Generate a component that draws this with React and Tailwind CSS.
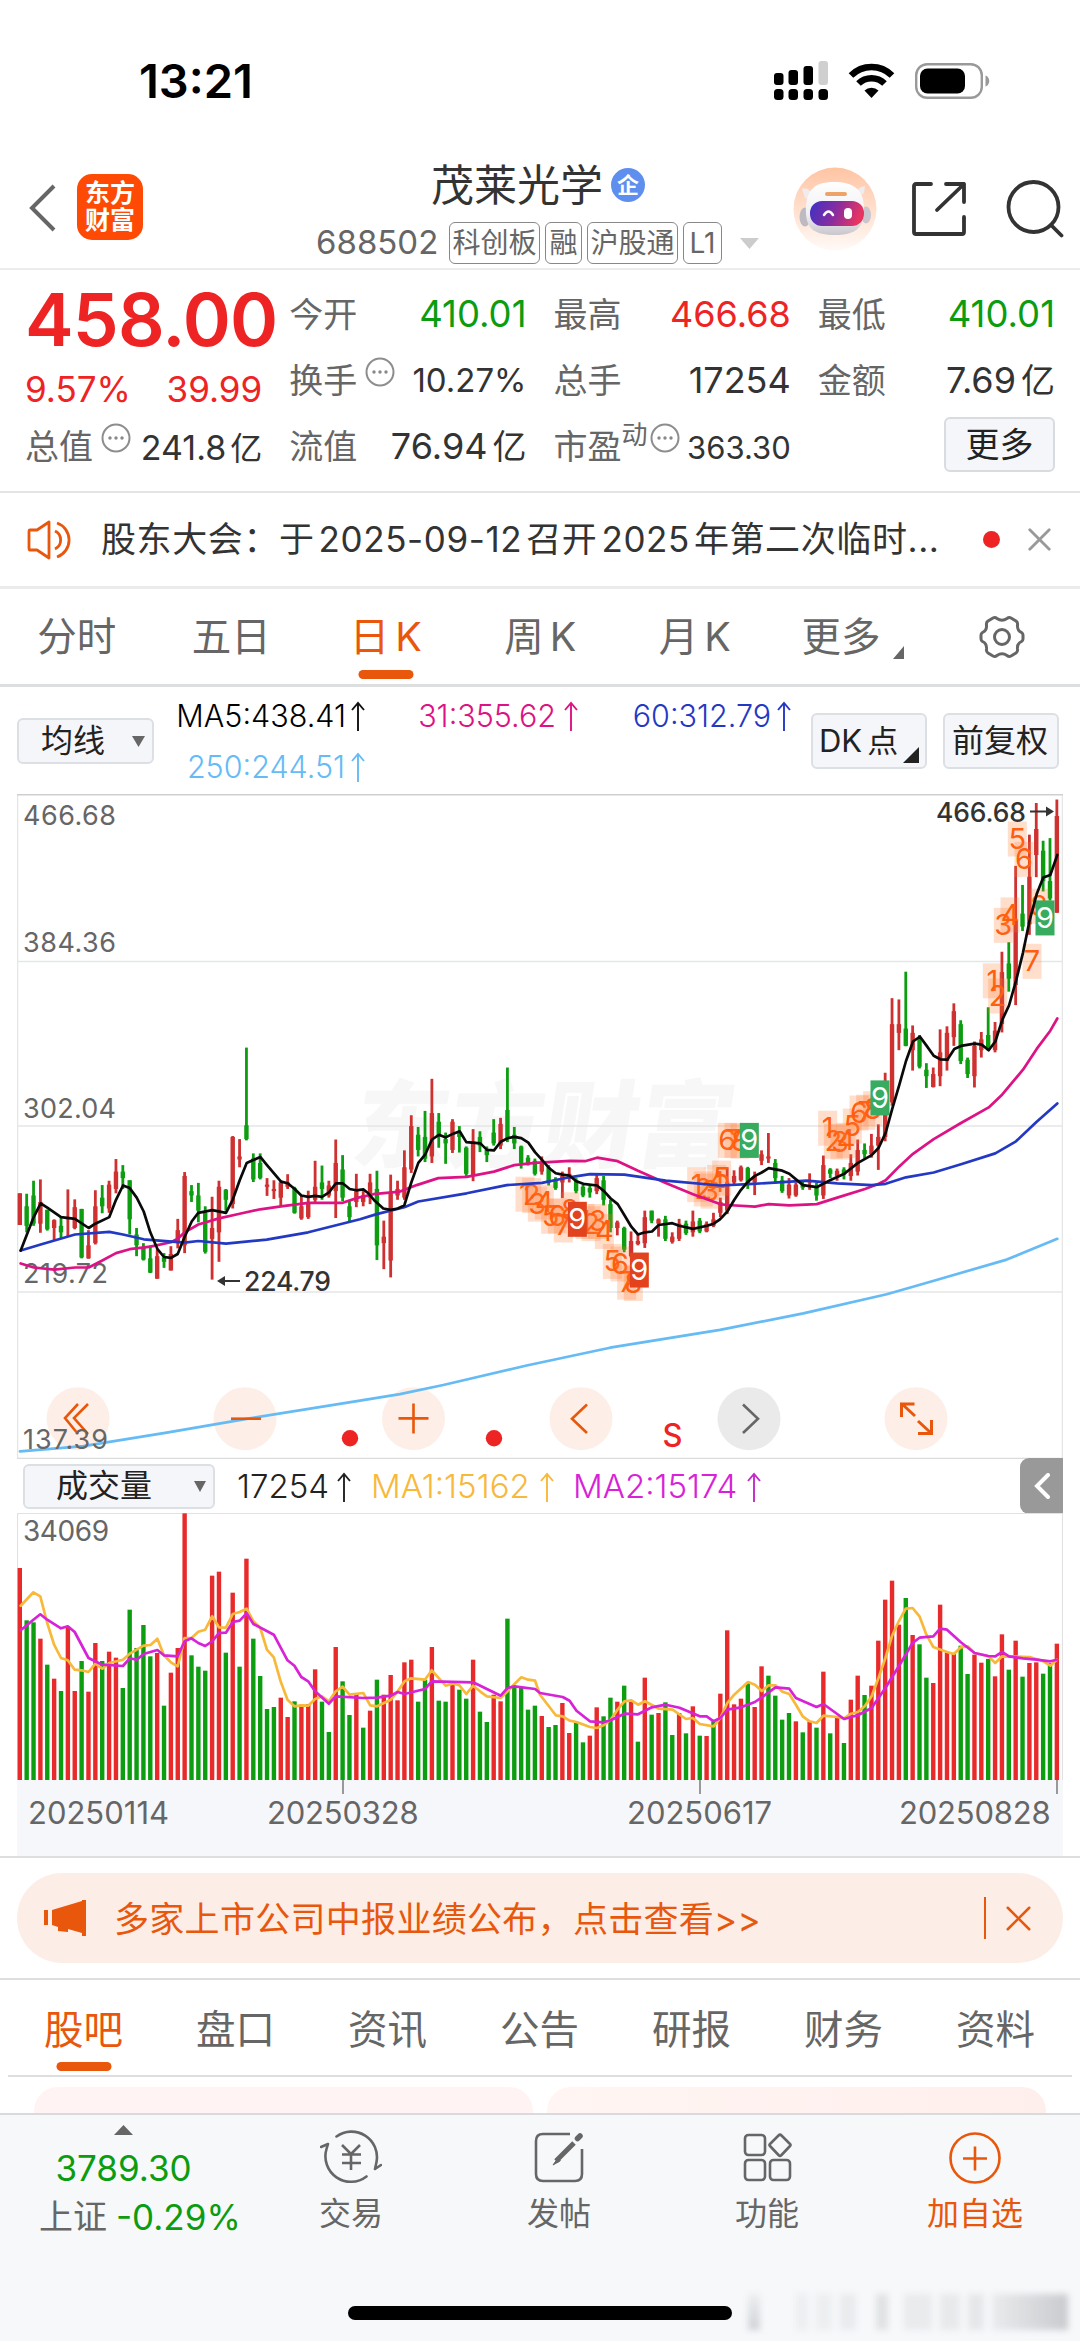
import React, { useState } from "react";
import { X } from "lucide-react";

const RED = "#ee2324";
const ORANGE = "#e8570b";

// ---- candles: colour, high, body top, body bottom, low (axis units from the top of the panel)
const CANDLES = `r 930 930 1003 1003|g 931 960 1005 1020|g 901 935 1000 1005|r 898 950 1000 1021|g 968 968 1013 1016|r 990 992 1010 1038|g 985 1005 1020 1035|r 921 985 990 1030|r 944 962 1010 1013|g 966 966 1078 1080
r 1015 1050 1080 1081|r 923 960 1045 1048|g 911 940 960 976|r 901 910 965 975|r 851 880 920 930|g 865 880 895 920|g 900 900 990 1025|g 1010 1025 1050 1075|g 1045 1055 1083 1085|g 1050 1080 1113 1114
r 1060 1075 1127 1127|g 1068 1078 1088 1102|r 1052 1070 1108 1108|r 989 1015 1040 1057|r 881 890 1050 1068|g 911 925 935 950|g 906 935 970 997|g 960 975 1065 1069|r 938 1010 1035 1129|r 901 915 1020 1088
g 920 922 945 970|r 798 800 955 965|r 805 845 852 870|g 594 773 805 808|g 838 850 898 904|g 838 860 895 898|r 895 910 915 936|r 900 920 925 943|r 900 905 940 960|r 886 905 915 920
g 915 918 975 977|r 935 960 988 991|r 924 950 985 989|r 855 915 945 950|g 866 905 920 945|r 901 912 935 940|r 806 860 925 987|g 842 875 940 948|g 948 960 985 997|r 885 925 950 962
r 925 935 950 960|r 885 905 940 955|g 878 920 1050 1084|r 993 1030 1045 1105|r 887 930 1085 1124|r 901 920 935 945|r 831 870 940 945|r 750 775 875 883|g 777 795 830 845|g 740 800 850 858
r 666 745 845 860|g 745 765 800 825|g 790 805 815 862|r 759 765 830 837|g 775 790 800 836|g 822 825 885 890|r 782 810 890 902|g 787 800 820 835|g 822 830 842 858|g 759 790 815 820
r 756 770 820 828|g 640 738 805 812|g 777 795 815 828|g 820 822 860 873|g 842 848 860 866|g 850 855 885 889|r 845 862 880 887|g 865 870 905 912|g 893 897 918 922|r 880 890 905 941
r 870 885 895 905|g 895 900 925 930|g 910 915 935 939|g 912 918 928 940|r 888 895 925 932|g 890 900 945 958|g 945 955 1010 1020|r 993 997 1010 1027|g 1007 1010 1060 1066|r 1018 1040 1075 1078
r 1025 1040 1047 1050|r 970 985 1045 1056|g 970 970 993 999|r 988 990 1000 1030|g 982 990 1035 1040|r 1020 1030 1042 1046|r 989 1000 1035 1040|g 993 1000 1022 1026|r 970 995 1020 1030|g 987 993 1018 1022
r 995 1000 1018 1020|r 975 990 1005 1008|r 940 950 975 985|r 870 905 970 978|r 877 890 905 910|r 866 870 900 903|g 869 872 910 920|r 880 890 905 934|r 831 840 855 865|r 791 845 850 860
g 851 860 895 908|g 890 900 925 929|r 895 910 935 942|r 905 910 935 938|g 900 910 917 922|r 884 900 905 922|g 905 915 935 947|r 843 865 935 943|g 872 875 885 895|r 873 878 890 901
g 870 875 887 898|r 840 860 890 901|r 806 830 880 889|g 815 830 840 850|r 793 820 840 848|r 771 800 820 876|r 652 700 800 810|r 480 540 720 728|r 483 540 560 600|g 419 550 590 591
r 543 560 600 647|g 565 575 638 642|g 630 645 660 687|r 640 655 685 686|r 552 605 660 683|r 545 560 625 647|r 492 510 570 590|g 531 540 625 632|g 617 622 655 664|r 580 590 660 686
r 558 575 600 617|g 501 565 595 602|r 535 555 600 605|r 373 420 540 559|g 351 400 435 465|r 175 300 450 496|g 219 285 315 325|r 103 200 310 334|r 30 90 150 201|g 117 140 210 234
g 111 210 250 255|r 22 60 283 283`
	.split(/[|\n]/)
	.map((row) => {
		const [color, ...v] = row.trim().split(" ");
		return { color, v: v.map(Number) };
	});

// ---- volume bars: colour + top edge
const VOLUMES = `r595 g752 g758 r807 g885 r927 g964 r770 r964 g874 r966 r820 g874 r846 r864 g955 g720 g835 g766 g860 r850 g1008 r909 r835 r431 g857 g891 g903 r618 r606 g849 r669 g891 r567 g807 g919 g1018 g1012 r984 r1042 g995 r1005 r1003 r899 g996 g1087 r832 g935 g1036 r970 g1074 r1023 g930 r975 r916 r992 r878 r870 g996 g930 r832 g993 g996 r945 g960 g987 r870 g1026 g1057 r975 r995 g747 g950 g955 g1020 g1008
r1039 g1072 g1066 r1000 r1090 g1060 g1118 r1098 r1013 g1040 g984 r996 g948 r993 g1116 r924 g1035 r1030 g998 g1096 r1030 g1091 r1010 g1098 r1099 g1055 r972 r782 r1004 r987 g940 r1012 r890 g918 g978 g1050 g1030 r1055 g1088 r1055 g1074 r906 g1091 r1045 g1120 r990 r918 g976 r948 r813 r690 r633 r765 g685 r796 g824 g924 r940 r705 r849 r853 g828 g913 r855 r879 g868 r920 r794 g900 r813 g921 r880 r878 g912 g880 r822`.split(
	/\s+/
);

// each line is kept in thirds of the panel
const MA5 = [
	"62,1062 101,985 122,953 142,963 183,985 225,989 266,1010 286,1000 328,985 348,945 369,912 389,918 410,940 431,972 451,1020 472,1058 492,1077 513,1079 533,1070 554,1030 575,995 595,975 637,969 678,975 698,945 719,900 740,860 781,846 801,865 843,903 863,907 884,920 904,935 925,938 946,936 966,938 987,928 1008,907 1028,907 1049,920 1069,923",
	"10,921 25,930 45,948 70,965 92,968 113,965 133,958 154,905 175,860 196,840 216,806 237,795 257,801 278,793 299,787 319,812 361,815 381,830 402,831 422,811 443,803 463,800 484,803 505,813 525,835 546,853 566,871 587,884 607,887 628,889 649,902 670,908 711,912 732,925 752,942 773,955 793,980 814,1007 834,1025 855,1020 876,1018 896,1003 937,999 958,1005 999,1012 1041,1005 1061,1000",
	"0,990 22,972 43,945 63,922 84,903 105,890 125,882 146,872 187,878 208,885 228,898 249,911 290,916 332,899 373,885 414,860 455,842 476,825 497,790 517,735 538,680 558,625 579,580 600,569 620,590 641,613 661,621 682,622 703,597 723,590 764,585 785,587 806,600 826,580 847,530 867,497 888,440 909,375 929,300 950,240 970,202 991,196 1012,150",
];
const MA31 = [
	"62,1092 101,1101 163,1106 225,1101 266,1101 307,1085 348,1068 389,1059 451,1053 513,1043 533,1035 554,1020 595,1002 657,988 719,977 781,967 843,960 925,952 1028,952 1075,940",
	"40,932 120,926 170,911 235,895 320,892 402,880 463,865 525,860 630,855 675,856 711,848 773,856 834,878 917,906 999,932 1080,955",
	"22,957 105,961 146,955 208,958 290,955 352,940 435,920 476,908 497,900 538,868 579,839 641,805 723,768 806,732 847,702 909,645 950,597 991,555 1012,527",
];
const MA60 = [
	"62,1062 122,1048 225,1025 328,1019 369,1025 431,1036 554,1044 595,1040 678,1046 800,1037 925,1020 1080,990",
	"50,978 133,962 175,949 320,930 440,911 546,906 628,893 690,886 793,887 917,901 1080,912",
	"84,909 260,901 352,907 455,911 497,908 558,893 641,882 723,863 826,838 888,810 950,765 1012,723",
];
const MA250 = [
	"60,1525 250,1513 500,1482 740,1450 1080,1408",
	"120,1393 250,1372 500,1327 750,1286 1080,1245",
	"250,1207 500,1163 600,1141 860,1083 1012,1035",
];

// volume lines are kept in halves
const VMA1 = [
	"60,708 97,668 117,680 137,760 157,825 177,865 197,872 217,900 237,902 257,907 277,882 297,897 317,880 357,870 377,852 417,828 437,826 457,807 476,857 496,878 516,890 536,805 556,805 576,786 596,780 616,740 636,773 656,774 676,733 696,727 716,717 736,755 756,775 775,840 795,863 815,935 835,990 855,1010 875,1007 895,1008 915,988 935,980 955,995 975,965 995,951 1015,975 1055,970 1075,1007 1095,1010 1135,990 1155,965 1175,935 1194,926 1234,930 1254,902 1294,948 1314,942 1334,947 1354,973 1374,948 1394,965 1414,980 1454,985 1474,965 1494,943 1514,923 1534,930 1554,933",
	"0,975 46,1037 66,1040 86,1053 106,1057 145,1072 165,1075 185,1067 205,1050 225,1020 245,995 265,992 285,1005 305,995 345,1017 385,1020 424,1048 444,1045 464,1063 504,1070 524,1045 544,1000 564,975 604,937 624,945 644,964 664,947 684,947 704,966 724,973 743,1005 763,1040 783,1055 803,1060 823,1038 863,1042 883,1046 903,1032 923,1027 943,1010 963,980 983,925 1003,865 1022,800 1042,755 1062,717 1082,715 1102,740 1122,795 1142,832 1182,847 1202,853 1222,833 1242,830 1262,850 1302,860 1322,880 1342,860 1422,862 1462,875 1482,888 1501,870",
];
const VMA2 = [
	"60,782 97,750 117,734 137,750 177,776 197,770 217,787 257,865 297,885 357,889 377,866 397,870 417,853 457,841 476,857 516,860 536,815 556,806 576,820 596,829 616,815 636,790 656,789 676,757 696,753 716,731 736,763 795,795 835,872 855,888 875,922 895,935 915,965 955,1002 975,980 1055,985 1095,984 1135,978 1155,967 1175,973 1234,958 1254,935 1374,938 1414,958 1454,978 1474,955 1494,950 1554,958",
	"0,970 66,982 86,993 106,1023 145,1055 185,1058 205,1052 245,1032 285,1034 325,1013 365,1005 405,1014 464,1040 484,1040 504,1055 524,1045 544,1020 584,1013 624,997 644,983 684,953 724,957 743,985 803,1012 823,1003 883,1048 923,1037 963,1015 1003,955 1042,890 1082,820 1102,804 1142,800 1162,777 1182,780 1222,818 1262,850 1302,859 1322,860 1342,847 1362,860 1402,866 1442,870 1482,875 1501,870",
];

// sequence counters: label, third of the panel, x, y, fill of the ninth one
const MARKS = [
	"1 1 495 932", "2 1 515 935", "3 1 532 955", "4 1 553 950", "5 1 572 983", "6 1 592 982", "7 1 610 1003", "8 1 630 968",
	"1 1 675 995", "2 1 693 1000", "3 1 713 995", "4 1 733 1018", "9 1 652 990 #e2431e",
	"5 1 757 1087", "6 1 780 1093", "7 1 800 1135", "8 1 820 1138", "9 1 838 1107 #e2431e",
	"1 1 1010 910", "2 1 1030 920", "3 1 1050 925", "4 1 1070 905", "5 2 5 895", "6 2 22 808", "7 2 42 808", "8 2 60 810", "9 2 88 808 #37ab5f",
	"1 2 323 780", "2 2 340 810", "3 2 360 812", "4 2 378 808", "5 2 397 775", "6 2 417 745", "7 2 437 743", "8 2 458 735", "9 2 480 710 #37ab5f",
	"1 2 817 440", "2 2 833 475", "3 2 850 312", "4 2 870 288", "5 2 892 113", "6 2 912 160", "7 2 936 395", "8 2 957 268", "9 2 975 295 #37ab5f",
].map((m) => m.split(" "));

const STEP = 6.868;
const barX = (i) => 2.8 + i * STEP;
const priceY = (v) => v / 2.306 - 4;

const tracePrice = (parts) =>
	parts
		.map((part, n) =>
			part
				.split(" ")
				.map((p) => {
					const [x, y] = p.split(",");
					return `${(n * 360 + x / 3 - 17).toFixed(1)},${priceY(y).toFixed(1)}`;
				})
				.join(" ")
		)
		.join(" ");

const traceVolume = (parts) =>
	parts
		.map((part, n) =>
			part
				.split(" ")
				.map((p) => {
					const [x, y] = p.split(",");
					return `${(n * 540 + x / 2.904 - 17).toFixed(1)},${((y - 430) / 3).toFixed(1)}`;
				})
				.join(" ")
		)
		.join(" ");

const Line = ({ points, color, width = 2.7 }) => (
	<polyline points={points} fill="none" stroke={color} strokeWidth={width} strokeLinejoin="round" strokeLinecap="round" />
);

const AxisLabel = ({ x = 6, y, width = 93, size = 27, bold, children }) => (
	<text
		x={x}
		y={y}
		textLength={width}
		fontSize={size}
		fontWeight={bold ? 500 : 400}
		fill={bold ? "#333" : "#666"}
	>
		{children}
	</text>
);

const PriceChart = () => (
	<svg width="1046" height="665" viewBox="0 0 1046 665" className="block">
		<text x="390" y="366" fontSize="95" fontWeight="900" textLength="380" fill="#f7f7f8" transform="skewX(-9)">
			东方财富
		</text>
		<g stroke="#e4e6e8" strokeWidth="1.6">
			<path d="M0 167.5H1046M0 332H1046M0 498H1046" />
			<path d="M0.5 0V665M1045.5 0V665" />
			<path d="M0 0.8H1046" stroke="#cfcfcf" />
			<path d="M0 664.5H1046" stroke="#d9dbdd" />
		</g>
		<AxisLabel y="31">466.68</AxisLabel>
		<AxisLabel y="158">384.36</AxisLabel>
		<AxisLabel y="323.5">302.04</AxisLabel>
		<AxisLabel y="489" width={85}>219.72</AxisLabel>

		{CANDLES.map(({ color, v }, i) => (
			<g key={i} fill={color === "r" ? "#cf3030" : "#0d9d10"}>
				<rect x={barX(i) - 1.4} y={priceY(v[0])} width="2.8" height={(v[3] - v[0]) / 2.306} />
				<rect x={barX(i) - 2.2} y={priceY(v[1])} width="4.4" height={(v[2] - v[1]) / 2.306} />
			</g>
		))}

		{[
			[61, "#fdeee6"],
			[228, "#fdeee6"],
			[396.5, "#fdeee6"],
			[564, "#fdeee6"],
			[732, "#e9e9e9"],
			[899, "#fdeee6"],
		].map(([cx, fill]) => (
			<circle key={cx} cx={cx} cy="624.7" r="31.5" fill={fill} fillOpacity="0.95" />
		))}
		<Line points={tracePrice(MA250)} color="#66bbf5" />

		{MARKS.map(([label, n, x, y, fill], i) => {
			const cx = n * 360 + x / 3 - 17;
			const cy = priceY(y);
			return (
				<g key={i}>
					<rect x={cx - 9.5} y={cy - 17.5} width="19" height="35" fill={fill || "#ff7a33"} fillOpacity={fill ? 1 : 0.25} />
					<text x={cx} y={cy + 10} fontSize="29" textAnchor="middle" fill={fill ? "#fff" : "#ff5e0e"}>
						{label}
					</text>
				</g>
			);
		})}
		<Line points={tracePrice(MA31)} color="#dd1284" />
		<Line points={tracePrice(MA60)} color="#2339c4" />
		<Line points={tracePrice(MA5)} color="#0a0a0a" />

		<AxisLabel x={919} y={27.5} width={90} size={26.5} bold>466.68</AxisLabel>
		<path d="M1013 17.5H1033" stroke="#333" strokeWidth="2" />
		<path d="M1029 12.5L1037 17.5L1029 22.5Z" fill="#333" />
		<AxisLabel x={227} y={496.5} width={87} size={26.5} bold>224.79</AxisLabel>
		<path d="M204 487H223" stroke="#333" strokeWidth="2" />
		<path d="M208 482L200 487L208 492Z" fill="#333" />

		<g fill="none" stroke={ORANGE} strokeWidth="2.6">
			<path d="M61 610L48 624L61 640M71 610L57 624L71 640" />
			<path d="M214 624.7H244" />
			<path d="M381.5 624.4H411.5M396.5 609.5V639.5" />
			<path d="M570 610.5L555 624.7L570 639" />
			<path d="M726 610.5L741 624.7L726 639" stroke="#666" />
			<path d="M898 622L885 610M884.5 623V610H897.5M901 627L914 639M914.5 626V639.5H901" strokeWidth="3" />
		</g>
		<AxisLabel y="655" width={85}>137.39</AxisLabel>
		<circle cx="333" cy="644.3" r="8.2" fill={RED} />
		<circle cx="477" cy="644.3" r="8.2" fill={RED} />
		<text x="645.5" y="653" fontSize="32" fontWeight="500" textLength="20" lengthAdjust="spacingAndGlyphs" fill={RED}>
			S
		</text>
	</svg>
);

const VolumeChart = () => (
	<svg width="1046" height="267" viewBox="0 0 1046 267" className="block">
		<path d="M0 0.5H1046M0.5 0V267M1045.5 0V267" stroke="#dfe1e3" strokeWidth="1.2" />
		<AxisLabel y="27.5" x={6} width={86} size={28}>34069</AxisLabel>
		{VOLUMES.map((bar, i) => {
			const top = (Number(bar.slice(1)) - 430) / 3;
			return (
				<rect
					key={i}
					x={barX(i) - 2.2}
					y={top}
					width="4.4"
					height={267 - top}
					fill={bar[0] === "r" ? "#e92a2a" : "#0d9d10"}
				/>
			);
		})}
		<Line points={traceVolume(VMA1)} color="#f8b93a" />
		<Line points={traceVolume(VMA2)} color="#d722d7" />
	</svg>
);

const MoreDots = () => (
	<svg width="30" height="30" viewBox="0 0 30 30" className="shrink-0">
		<circle cx="15" cy="15" r="13.5" fill="none" stroke="#8d8d8d" strokeWidth="2" />
		<g fill="#888">
			<circle cx="9" cy="15" r="1.7" />
			<circle cx="15" cy="15" r="1.7" />
			<circle cx="21" cy="15" r="1.7" />
		</g>
	</svg>
);

const Quote = ({ label, value, unit, color = "text-[36px] text-[#333]", children }) => (
	<div className="flex h-[66px] items-center justify-between whitespace-nowrap">
		<div className="flex items-center text-[#666]">
			{label}
			{children}
		</div>
		<div className={color}>
			{value}
			{unit && <span className="ml-[5px] text-[34px]">{unit}</span>}
		</div>
	</div>
);

const StatusBar = () => (
	<div className="flex h-[150px] items-start justify-between pt-[57px] pr-[90px] pl-[139px]">
		<div className="text-[47px] leading-[48px] font-semibold text-black">13:21</div>
		<div className="flex items-center gap-5 pt-1">
			<svg width="54" height="40" viewBox="0 0 54 40">
				<g fill="#000">
					<rect x="0" y="12" width="9.5" height="12" rx="3" />
					<rect x="14.5" y="9" width="9.5" height="15" rx="3" />
					<rect x="29.5" y="5" width="9.5" height="19" rx="3" />
					<rect x="0" y="28" width="9.5" height="11" rx="3.5" />
					<rect x="14.5" y="28" width="9.5" height="11" rx="3.5" />
					<rect x="29.5" y="28" width="9.5" height="11" rx="3.5" />
					<rect x="44.5" y="28" width="9.5" height="11" rx="3.5" />
				</g>
				<rect x="44.5" y="0" width="9.5" height="24" rx="3" fill="#cfcfcf" />
			</svg>
			<svg width="47" height="36" viewBox="0 0 47 36">
				<g fill="none" stroke="#000" strokeWidth="6.5">
					<path d="M3 12.5A29 29 0 0 1 44 12.5" />
					<path d="M10.5 20.5A18.5 18.5 0 0 1 36.5 20.5" />
				</g>
				<path d="M23.5 35L16.5 27.5A10 10 0 0 1 30.5 27.5Z" />
			</svg>
			<svg width="75" height="36" viewBox="0 0 75 36">
				<rect x="1.2" y="1.2" width="65.6" height="33.6" rx="11" fill="none" stroke="#999" strokeWidth="2.4" />
				<rect x="5" y="5.5" width="45" height="25" rx="7.5" />
				<path d="M70.5 12.5C75.5 14 75.5 22 70.5 23.5Z" fill="#999" />
			</svg>
		</div>
	</div>
);

const Robot = () => (
	<svg width="84" height="84" viewBox="0 0 84 84">
		<defs>
			<linearGradient id="halo" x1="0" y1="0" x2="0" y2="1">
				<stop offset="0" stopColor="#ffc4a3" />
				<stop offset="1" stopColor="#fffaf7" />
			</linearGradient>
			<linearGradient id="visor" x1="0" y1="0" x2="1" y2="0.2">
				<stop offset="0" stopColor="#3b32c4" />
				<stop offset="0.55" stopColor="#8b2c9e" />
				<stop offset="1" stopColor="#e73461" />
			</linearGradient>
			<linearGradient id="shell" x1="0" y1="0" x2="0" y2="1">
				<stop offset="0" stopColor="#fff" />
				<stop offset="0.6" stopColor="#f0eff2" />
				<stop offset="1" stopColor="#c9c7cd" />
			</linearGradient>
		</defs>
		<circle cx="42" cy="42" r="41.5" fill="url(#halo)" />
		<path d="M9 22C14 20 21 25 20 34L12 31ZM72 19C66 20 60 25 62 32L71 26Z" fill="#eeecef" />
		<ellipse cx="12" cy="50" rx="5.5" ry="9.5" fill="#bdbac2" />
		<ellipse cx="73" cy="48" rx="5" ry="8.5" fill="#c9c6cd" />
		<path d="M13 47C12 20 24 15 41 15C60 15 72 22 71 44C71 61 62 68 42 68C22 68 14 62 13 47Z" fill="url(#shell)" />
		<rect x="32" y="25" width="22" height="4" rx="2" fill="#eda267" />
		<rect x="17" y="34" width="54" height="25" rx="12" fill="url(#visor)" />
		<path d="M31 48Q35.5 41 40 48" fill="none" stroke="#fff" strokeWidth="2.5" strokeLinecap="round" />
		<rect x="51" y="41" width="8" height="11" rx="4" fill="#fff" />
	</svg>
);

const Tag = ({ width, children }) => (
	<span
		className={`flex h-[42px] shrink-0 items-center justify-center rounded-md border-[1.5px] border-[#888] whitespace-nowrap ${width}`}
	>
		{children}
	</span>
);

const Header = () => (
	<div className="flex h-[120px] items-center border-b-2 border-[#ececec] pl-[29px]">
		<svg width="27" height="48" viewBox="0 0 27 48" className="mt-[-3px]">
			<path d="M25 2L3 24L25 46" fill="none" stroke="#666" strokeWidth="4" />
		</svg>
		<div className="mt-[-4px] ml-[21px] flex h-[66px] w-[66px] flex-col items-center justify-center rounded-[15px] bg-[#fe4a04] text-[25px] leading-[27px] font-bold text-white">
			<span>东方</span>
			<span>财富</span>
		</div>
		<div className="mt-[6px] ml-[173px] flex w-[444px] flex-col items-center">
			<div className="flex h-[50px] items-center gap-2 text-[43px] text-[#333]">
				茂莱光学
				<span className="flex h-[34px] w-[34px] items-center justify-center rounded-full bg-[#5f8fee] text-[22px] font-bold text-white">
					企
				</span>
			</div>
			<div className="mt-3 flex h-[42px] w-full items-center gap-[5px] text-[28px] text-[#666]">
				<span className="mr-[7px] w-[121px] shrink-0 text-[33px]">688502</span>
				<Tag width="w-[91px]">科创板</Tag>
				<Tag width="w-[37px]">融</Tag>
				<Tag width="w-[91px]">沪股通</Tag>
				<Tag width="w-[39px]">L1</Tag>
				<svg width="19" height="11" viewBox="0 0 19 11" className="ml-[13px] shrink-0">
					<path d="M0 0H19L9.5 11Z" fill="#ccc" />
				</svg>
			</div>
		</div>
		<div className="ml-[33px] flex items-center">
			<Robot />
			<svg width="56" height="56" viewBox="0 0 56 56" className="ml-[34px]" fill="none" stroke="#333" strokeWidth="3.8" strokeLinecap="round" strokeLinejoin="round">
				<path d="M20 3H5Q3 3 3 5V51Q3 53 5 53H51Q53 53 53 51V36" />
				<path d="M35 3H53V21M53 3L26 29" />
			</svg>
			<svg width="58" height="58" viewBox="0 0 58 58" className="mt-[-1px] ml-[39px]" fill="none" stroke="#333" strokeWidth="3.8" strokeLinecap="round">
				<circle cx="27.5" cy="27" r="25" />
				<path d="M45 45L55.5 55.5" />
			</svg>
		</div>
	</div>
);

const QuotePanel = () => (
	<div className="grid h-[223px] grid-cols-4 gap-x-[27px] border-b-2 border-[#e3e4e6] px-[25px] pt-[11px] text-[34px]">
		<div className="whitespace-nowrap">
			<div className="h-[79px] text-[73px] leading-[77px] font-semibold tracking-[-0.8px] text-[#ee2324]">458.00</div>
			<div className="flex h-[55px] items-center justify-between pt-[4px] text-[35px] text-[#ee2324]">
				<span>9.57%</span>
				<span>39.99</span>
			</div>
			<div className="flex h-[62px] items-center justify-between">
				<div className="flex items-center gap-2 text-[#666]">
					总值
					<span className="pb-4">
						<MoreDots />
					</span>
				</div>
				<span className="pt-[2px] text-[34px] text-[#333]">
					241.8<span className="ml-[4px] text-[32px]">亿</span>
				</span>
			</div>
		</div>
		<div>
			<Quote label="今开" value="410.01" color="text-[36.5px] text-[#0b9c0f]" />
			<Quote label="换手" value="10.27%" color="pt-[2px] text-[33px] text-[#333]">
				<span className="pb-4 pl-2">
					<MoreDots />
				</span>
			</Quote>
			<Quote label="流值" value="76.94" unit="亿" />
		</div>
		<div>
			<Quote label="最高" value="466.68" color="text-[36px] text-[#ee2324]" />
			<Quote label="总手" value="17254" />
			<Quote label="市盈" value="363.30" color="pt-[4px] text-[31px] text-[#333]">
				<span className="pb-6 text-[26px]">动</span>
				<span className="pb-4 pl-[2px]">
					<MoreDots />
				</span>
			</Quote>
		</div>
		<div>
			<Quote label="最低" value="410.01" color="text-[36.5px] text-[#0b9c0f]" />
			<Quote label="金额" value="7.69" unit="亿" />
			<div className="flex h-[66px] items-center justify-end">
				<button className="mt-[-3px] h-[55px] w-[111px] rounded-md border-2 border-[#d8dbe0] bg-[#f5f6f9] text-[34px] leading-none text-[#222]">
					更多
				</button>
			</div>
		</div>
	</div>
);

const Notice = () => (
	<div className="flex h-[96px] items-center border-b-[3px] border-[#ebebeb] pl-[27px]">
		<svg width="48" height="40" viewBox="0 0 48 40" fill="none" stroke={ORANGE} strokeWidth="2.8" strokeLinejoin="round">
			<path d="M22 2V38L10 30H3Q2 30 2 28V12Q2 10 3 10H10Z" />
			<path d="M28 11A10 10 0 0 1 28 29M30 3A18 18 0 0 1 30 37" />
		</svg>
		<div className="ml-[26px] w-[850px] text-[35px] tracking-[0.6px] whitespace-nowrap text-[#333]">
			股东大会：于<span className="px-1">2025-09-12</span>召开<span className="px-1">2025</span>年第二次临时...
		</div>
		<span className="ml-[32px] h-[17px] w-[17px] rounded-full bg-[#ee2324]" />
		<X size={39} strokeWidth={1.7} color="#999" className="ml-[20px]" />
	</div>
);

const PeriodTabs = ({ active, onPick }) => (
	<div className="flex h-[98px] items-center border-b-[3px] border-[#dcdee0] text-[39.5px] text-[#666]">
		{["分时", "五日", "日 K", "周 K", "月 K"].map((name) => (
			<button
				key={name}
				onClick={() => onPick(name)}
				className={
					active === name
						? "relative h-full w-[154.5px] pt-[2px] text-[#e8570b]"
						: "relative h-full w-[154.5px] pt-[2px]"
				}
			>
				<span className="mr-[1px] [word-spacing:-5px]">{name}</span>
				{active === name && (
					<span className="absolute bottom-[5px] left-1/2 h-[9px] w-[55px] -translate-x-1/2 rounded-full bg-[#e8570b]" />
				)}
			</button>
		))}
		<div className="ml-[29px] flex items-end pt-[2px]">
			更多
			<svg width="11" height="13" viewBox="0 0 11 13" className="mb-2 ml-[12px]">
				<path d="M11 0V13H0Z" fill="#666" />
			</svg>
		</div>
		<svg width="46" height="44" viewBox="0 0 46 44" className="ml-[75px]" fill="none" stroke="#666" strokeWidth="3" strokeLinejoin="round">
			<path d="M14 3Q16 2 18 3.5Q23 7 28 3.5Q30 2 32 3L37 6Q39 7.5 38.5 10Q38 15.5 42.5 17.5Q44 18.5 44 20V24Q44 25.5 42.5 26.5Q38 28.5 38.5 34Q39 36.5 37 38L32 41Q30 42 28 40.5Q23 37 18 40.5Q16 42 14 41L9 38Q7 36.5 7.5 34Q8 28.5 3.5 26.5Q2 25.5 2 24V20Q2 18.5 3.5 17.5Q8 15.5 7.5 10Q7 7.5 9 6Z" />
			<circle cx="23" cy="22" r="7.5" />
		</svg>
	</div>
);

const Arrow = ({ color }) => (
	<svg width="14" height="30" viewBox="0 0 14 30" className="shrink-0">
		<path d="M7 30V2M1 9L7 2L13 9" fill="none" stroke={color} strokeWidth="1.9" />
	</svg>
);

const MaRow = () => (
	<div className="flex h-[107px] pl-[17px]">
		<div className="mt-[31px] flex h-[46px] w-[137px] items-center justify-between rounded-md border-2 border-[#dcdfe3] bg-[#f5f6f9] pr-[7px] pl-[22px] text-[32px] leading-none text-[#222]">
			均线
			<svg width="13" height="11" viewBox="0 0 13 11">
				<path d="M0 0H13L6.5 11Z" fill="#666" />
			</svg>
		</div>
		<div className="flex w-[657px] flex-col pt-[3px] text-[30.5px] font-light">
			<div className="flex h-[51px] items-center whitespace-nowrap">
				<div className="flex w-[211px] items-center justify-end gap-[5px] text-black">
					MA5:438.41
					<Arrow color="#111" />
				</div>
				<div className="flex w-[213px] items-center justify-end gap-[8px] text-[#dd1284]">
					31:355.62
					<Arrow color="#dd1284" />
				</div>
				<div className="flex w-[213px] items-center justify-end gap-[6px] text-[#2339c4]">
					60:312.79
					<Arrow color="#2339c4" />
				</div>
			</div>
			<div className="flex h-[51px] w-[211px] items-center justify-end gap-[6px] text-[#66bbf5]">
				250:244.51
				<Arrow color="#66bbf5" />
			</div>
		</div>
		<div className="relative mt-[26px] flex h-[56px] w-[116px] items-center gap-[5px] rounded-md border-2 border-[#dcdfe3] bg-[#f5f6f9] pl-[6px] text-[31px] whitespace-nowrap text-[#222]">
			DK<span>点</span>
			<svg width="16" height="16" viewBox="0 0 16 16" className="absolute right-[6px] bottom-[4px]">
				<path d="M16 0V16H0Z" fill="#222" />
			</svg>
		</div>
		<div className="mt-[26px] ml-[16px] flex h-[56px] w-[116px] items-center justify-center rounded-md border-2 border-[#dcdfe3] bg-[#f5f6f9] pr-[2px] text-[32px] text-[#222]">
			前复权
		</div>
	</div>
);

const VolumeHeader = () => (
	<div className="flex h-[54px] items-center text-[33px] font-light">
		<div className="ml-[6px] flex h-[45px] w-[192px] items-center justify-between rounded-md border-2 border-[#dcdfe3] bg-[#f5f6f9] pr-[7px] pl-[31px] text-[32px] leading-none font-normal text-[#222]">
			成交量
			<svg width="12" height="11" viewBox="0 0 12 11">
				<path d="M0 0H12L6 11Z" fill="#666" />
			</svg>
		</div>
		<div className="ml-[22px] flex w-[114px] items-center justify-between pt-[2px] text-[#222]">
			17254
			<Arrow color="#222" />
		</div>
		<div className="ml-[20px] flex w-[183px] items-center justify-between pt-[2px] text-[#f8b93a]">
			MA1:15162
			<Arrow color="#f8b93a" />
		</div>
		<div className="ml-[19px] flex w-[188px] items-center justify-between pt-[2px] text-[#d722d7]">
			MA2:15174
			<Arrow color="#c32bc8" />
		</div>
		<div className="ml-auto flex h-[56px] w-[43px] items-center justify-center rounded-l-[9px] bg-[#999]">
			<svg width="16" height="26" viewBox="0 0 16 26">
				<path d="M14 2L3 13L14 24" fill="none" stroke="#fff" strokeWidth="4" strokeLinecap="round" />
			</svg>
		</div>
	</div>
);

const DateAxis = () => (
	<div className="h-[76px] bg-[#f6f7fa] text-[31px] leading-none text-[#666]">
		<div className="flex h-[14px]">
			<span className="ml-[325px] w-[2px] bg-[#999]" />
			<span className="ml-[355px] w-[2px] bg-[#999]" />
			<span className="ml-auto mr-[5px] w-[2px] bg-[#999]" />
		</div>
		<div className="flex pt-[3px]">
			<span className="ml-[11px] w-[239px]">20250114</span>
			<span className="w-[360px] tracking-[-0.2px]">20250328</span>
			<span className="w-[272px]">20250617</span>
			<span className="tracking-[-0.2px]">20250828</span>
		</div>
	</div>
);

const Banner = () => (
	<div className="flex h-[124px] items-center border-t-2 border-b-2 border-[#dcdee0] px-[17px]">
		<div className="flex h-[90px] w-[1046px] items-center rounded-[45px] bg-[#fceee6] pl-[27px] text-[#e8570b]">
			<svg width="42" height="36" viewBox="0 0 42 36" fill={ORANGE}>
				<path d="M0 10H4V25H0ZM8 10L38 1V0H42V36H38V33L24 29V32L14 31V27L8 25Z" />
			</svg>
			<span className="ml-[28px] w-[841px] pt-[2px] text-[35px] tracking-[0.3px] whitespace-nowrap">多家上市公司中报业绩公布，点击查看&gt;&gt;</span>
			<span className="ml-[29px] h-[42px] w-[2px] bg-[#e8570b]" />
			<X size={43} strokeWidth={1.4} className="ml-[11px]" />
		</div>
	</div>
);

const SectionTabs = () => (
	<div className="mx-2 flex h-[97px] border-b-2 border-[#dcdee0] text-[39.5px] text-[#666]">
		{["股吧", "盘口", "资讯", "公告", "研报", "财务", "资料"].map((name, i) => (
			<button
				key={name}
				className={
					i === 0
						? "relative h-full w-[152px] pt-[6px] text-[#e8570b]"
						: "h-full w-[152px] pt-[6px]"
				}
			>
				<span className="mr-[1px]">{name}</span>
				{i === 0 && (
					<span className="absolute bottom-[4px] left-1/2 h-[9px] w-[55px] -translate-x-1/2 rounded-full bg-[#e8570b]" />
				)}
			</button>
		))}
	</div>
);

const NavItem = ({ label, color = "text-[#666]", children }) => (
	<div className={`flex w-[208px] flex-col items-center pt-[14px] ${color}`}>
		<svg width="62" height="56" viewBox="0 0 62 56" fill="none" stroke="currentColor" strokeWidth="2.6" strokeLinecap="round" strokeLinejoin="round">
			{children}
		</svg>
		<span className="mt-[10px] text-[32px] leading-[38px]">{label}</span>
	</div>
);

const BottomNav = () => (
	<div className="relative h-[228px] border-t-2 border-[#d9dade] bg-[#f6f8fa]">
		<div className="flex">
			<div className="flex w-[247px] flex-col items-center text-[35px] whitespace-nowrap">
				<svg width="19" height="10" viewBox="0 0 19 10" className="mt-[10px]">
					<path d="M0 10L9.5 0L19 10Z" fill="#666" />
				</svg>
				<div className="mt-[10px] h-[46px] leading-[46px] text-[#0b9c0f]">3789.30</div>
				<div className="flex w-full gap-[9px] pl-[39px] leading-[52px]">
					<span className="text-[34px] text-[#666]">上证</span>
					<span className="text-[#0b9c0f]">-0.29%</span>
				</div>
			</div>
			<NavItem label="交易">
				<path d="M16.5 7.5A25.5 25.5 0 0 1 56.5 33L55 40L61 36M46.5 47.5A25.5 25.5 0 0 1 6.5 20L8 15L1 18" />
				<path d="M22 16L31 25L40 16M22 25.5H41M22 34H41M31 25V41" strokeLinecap="butt" />
			</NavItem>
			<NavItem label="发帖">
				<path d="M42 5H15Q8 5 8 12V45Q8 52 15 52H47Q54 52 54 45V20" strokeLinecap="butt" />
				<path d="M46 14L28 32" strokeWidth="5" strokeLinecap="butt" />
				<path d="M30 29L25 36L32 32Z" fill="currentColor" strokeWidth="1" />
				<path d="M49.5 9.5L52 7" strokeWidth="5.5" />
			</NavItem>
			<NavItem label="功能">
				<rect x="9" y="6" width="20" height="20" rx="3.5" />
				<rect x="9" y="31" width="20" height="20" rx="3.5" />
				<rect x="34" y="31" width="20" height="20" rx="3.5" />
				<path d="M42.5 6.5Q44 5 45.5 6.5L54 15Q55 16 54 17L45.5 26Q44 27.5 42.5 26L34 17Q33 16 34 15Z" />
			</NavItem>
			<NavItem label="加自选" color="text-[#e8570b]">
				<circle cx="31" cy="29" r="24.5" />
				<path d="M19 29.5H43M31 17.5V41.5" strokeLinecap="butt" />
			</NavItem>
		</div>
		<div className="absolute bottom-[21px] left-[348px] h-[14px] w-[384px] rounded-full bg-black" />
		<div className="absolute right-[12px] bottom-[11px] flex h-[36px] w-[320px] items-stretch gap-2 blur-[3px]">
			<span className="w-3 bg-gradient-to-b from-[#eceef0] to-[#cfd2d5]" />
			<span className="ml-7 w-3 bg-[#eceef0]" />
			<span className="w-4 bg-[#eceef0]" />
			<span className="w-4 bg-[#e9ebed]" />
			<span className="ml-3 w-3 bg-[#e0e2e4]" />
			<span className="ml-2 w-7 bg-[#e9ebed]" />
			<span className="w-5 bg-[#e7e9eb]" />
			<span className="w-4 bg-[#e5e7e9]" />
			<span className="grow bg-gradient-to-r from-[#e9ebed] to-[#c9cbce]" />
		</div>
	</div>
);

const App = () => {
	const [period, setPeriod] = useState("日 K");

	return (
		<div className="h-[2342px] w-[1080px] overflow-hidden bg-white font-['Inter','Noto_Sans_CJK_SC',sans-serif]">
			<StatusBar />
			<Header />
			<QuotePanel />
			<Notice />
			<PeriodTabs active={period} onPick={setPeriod} />
			<MaRow />
			<div className="mx-[17px] w-[1046px]">
				<PriceChart />
				<VolumeHeader />
				<VolumeChart />
				<DateAxis />
			</div>
			<Banner />
			<SectionTabs />
			<div className="flex h-[36px] gap-[14px] overflow-hidden px-[34px] pt-[10px]">
				<div className="h-[60px] w-[499px] rounded-[24px] bg-[#fff4f3]" />
				<div className="h-[60px] w-[499px] rounded-[24px] bg-gradient-to-r from-[#fff5f3] to-[#ffefec]" />
			</div>
			<BottomNav />
		</div>
	);
};

export default App;
